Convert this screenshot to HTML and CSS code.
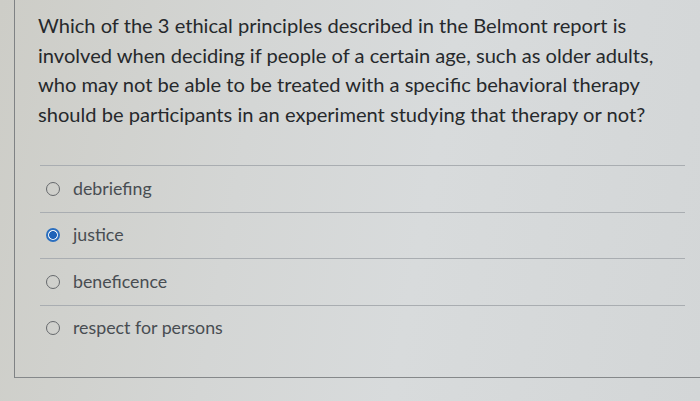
FILE: index.html
```html
<!DOCTYPE html>
<html lang="en">
<head>
<meta charset="utf-8">
<title>Question</title>
<link rel="stylesheet" href="styles.css">
</head>
<body>
<div class="screen">
  <div class="quiz">
    <p class="question">Which of the 3 ethical principles described in the Belmont report is<br>involved when deciding if people of a certain age, such as older adults,<br>who may not be able to be treated with a specific behavioral therapy<br>should be participants in an experiment studying that therapy or not?</p>
    <div class="answers">
      <label class="answer"><span class="radio"></span><span class="label">debriefing</span></label>
      <label class="answer"><span class="radio checked"></span><span class="label">justice</span></label>
      <label class="answer"><span class="radio"></span><span class="label">beneficence</span></label>
      <label class="answer"><span class="radio"></span><span class="label">respect for persons</span></label>
    </div>
  </div>
</div>
</body>
</html>
```

FILE: styles.css
```css
html, body {
  margin: 0;
  padding: 0;
}
body {
  width: 700px;
  height: 401px;
  overflow: hidden;
  background: linear-gradient(100deg, #cdcdc7 0%, #d4d6d5 35%, #d8dbdc 60%, #d3d6d7 100%);
  font-family: Lato, "Open Sans", sans-serif;
}
.screen {
  padding-left: 14px;
  height: 401px;
  box-sizing: border-box;
}
.quiz {
  border-left: 1px solid #7f8284;
  border-bottom: 1px solid #85888a;
  height: 378px;
  box-sizing: border-box;
  padding: 11px 15px 0 23px;
  display: flex;
  flex-direction: column;
}
.question {
  margin: 0;
  font-size: 20.1px;
  line-height: 29.5px;
  color: #26292c;
  white-space: nowrap;
}
.answers {
  margin-top: 36px;
  display: flex;
  flex-direction: column;
  margin-left: 2px;
}
.answer {
  height: 46.5px;
  border-top: 1px solid #a9adb1;
  display: flex;
  align-items: center;
  padding-left: 6px;
  box-sizing: border-box;
}
.radio {
  width: 14px;
  height: 14px;
  border: 1.5px solid #66696c;
  border-radius: 50%;
  box-sizing: border-box;
  margin-right: 13px;
  flex: none;
  background: transparent;
}
.radio.checked {
  border: 2px solid #2b6fbf;
  background: radial-gradient(circle, #1f63b8 0 3.6px, #f2f4f6 4.2px);
}
.label {
  font-size: 17.8px;
  color: #484d52;
  position: relative;
  top: -1px;
}
```
